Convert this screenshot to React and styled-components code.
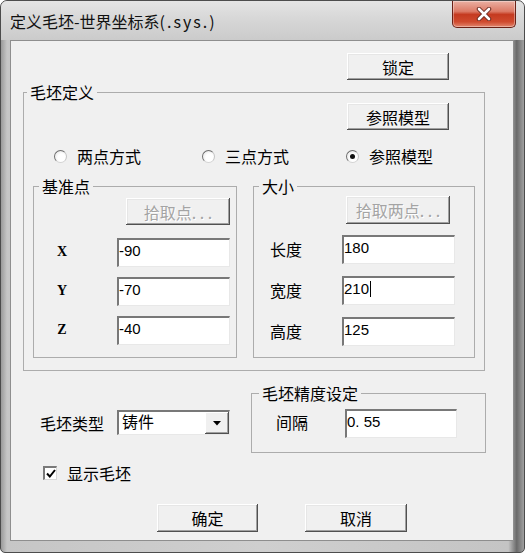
import React from "react";
import styled, { createGlobalStyle } from "styled-components";

const GlobalStyle = createGlobalStyle`
  html, body {
    margin: 0;
    padding: 0;
    background: #fff;
  }
  body {
    font-family: "Noto Sans CJK SC", "Liberation Sans", sans-serif;
    color: #000;
  }
`;

const Window = styled.div`
  width: 525px;
  height: 553px;
  box-sizing: border-box;
  display: flex;
  flex-direction: column;
  border: 1px solid #4c4c4c;
  border-radius: 7px 7px 5px 5px;
  overflow: hidden;
  background: linear-gradient(
    to right,
    #9a9a9a 0,
    #c6c6c6 6px,
    #cfcfcf 50%,
    #c4c4c4 97%,
    #6a6a6a 98.6%,
    #a0a0a0 100%
  );
`;

const TitleBar = styled.div`
  height: 39px;
  flex: none;
  display: flex;
  justify-content: space-between;
  align-items: flex-start;
  background: linear-gradient(to bottom, #e4e4e4 0%, #d6d6d6 50%, #cbcbcb 100%);
`;

const Title = styled.div`
  padding: 11px 0 0 9px;
  font-size: 16px;
  line-height: 18px;
  color: #111;
`;

const TitleLatin = styled.span`
  letter-spacing: 2px;
`;

const CloseButton = styled.div`
  width: 64px;
  height: 27px;
  margin-right: 8px;
  box-sizing: border-box;
  display: flex;
  align-items: center;
  justify-content: center;
  border: 1px solid #6b2116;
  border-top: none;
  border-radius: 0 0 5px 5px;
  background: linear-gradient(
    to bottom,
    #eab0a3 0%,
    #dc7a66 40%,
    #c53a20 52%,
    #cf4a2e 80%,
    #e2876f 100%
  );
  box-shadow: inset 0 0 0 1px rgba(255, 255, 255, 0.35);
`;

const Client = styled.div`
  flex: 1;
  margin: 0 10px 11px 9px;
  border: 1px solid #8e8e8e;
  background: #f0f0f0;
  display: flex;
  flex-direction: column;
`;

const ButtonBar = styled.div`
  display: flex;
  justify-content: ${(p) => (p.$start ? "flex-start" : "flex-end")};
  gap: ${(p) => p.$gap || 0}px;
  padding: ${(p) => p.$pt || 0}px ${(p) => p.$pr || 0}px 0 ${(p) => p.$pl || 0}px;
`;

const Button = styled.button`
  width: ${(p) => p.$w || 102}px;
  height: ${(p) => p.$h || 27}px;
  box-sizing: border-box;
  padding: 0;
  border: none;
  background: #f0f0f0;
  font-family: "Noto Sans CJK SC", sans-serif;
  font-size: 16px;
  line-height: 18px;
  color: #000;
  box-shadow: inset -1px -1px 0 #505050, inset 1px 1px 0 #ffffff,
    inset -2px -2px 0 #a0a0a0, inset 2px 2px 0 #e6e6e6;

  &:disabled {
    color: #a4a4a4;
    text-shadow: 1px 1px 0 #fff;
  }
`;

const Group = styled.fieldset`
  margin: ${(p) => p.$m || 0};
  padding: 0 0 ${(p) => p.$pb || 0}px 0;
  min-width: 0;
  width: ${(p) => (p.$w ? `${p.$w}px` : "auto")};
  box-sizing: border-box;
  border: 1px solid #acacac;
`;

const Legend = styled.legend`
  padding: 0 3px;
  margin-left: ${(p) => p.$indent}px;
  font-size: 16px;
  line-height: 18px;
`;

const RadioRow = styled.div`
  display: grid;
  grid-template-columns: 148px 144px 1fr;
  margin-top: 17px;
  padding-left: 30px;
`;

const RadioItem = styled.label`
  display: flex;
  align-items: center;
  gap: 10px;
  font-size: 16px;
  line-height: 18px;
`;

const RadioDot = styled.span`
  width: 13px;
  height: 13px;
  box-sizing: border-box;
  border-radius: 50%;
  border: 1px solid #7c7c7c;
  border-color: #6e6e6e #c4c4c4 #d4d4d4 #6e6e6e;
  background: radial-gradient(circle at 60% 60%, #ffffff 40%, #dcdcdc 100%);
  display: flex;
  align-items: center;
  justify-content: center;

  &::after {
    content: "";
    width: 5px;
    height: 5px;
    border-radius: 50%;
    background: ${(p) => (p.$checked ? "#111" : "transparent")};
  }
`;

const SubRow = styled.div`
  display: flex;
  align-items: stretch;
  gap: 16px;
  margin-top: 12px;
  padding-left: 9px;
`;

const FormGrid = styled.div`
  display: grid;
  grid-template-columns: ${(p) => p.$cols};
  row-gap: ${(p) => p.$rowGap || 0}px;
  align-items: center;
  padding: ${(p) => p.$pt || 0}px 0 0 ${(p) => p.$pl || 0}px;
`;

const AxisLabel = styled.div`
  text-align: center;
  font-family: "Liberation Serif", serif;
  font-weight: bold;
  font-size: 14px;
  padding-bottom: 2px;
`;

const Label = styled.div`
  font-size: 16px;
  line-height: 18px;
  padding-bottom: ${(p) => p.$lift || 0}px;
`;

const Field = styled.div`
  width: ${(p) => p.$w || 113}px;
  height: 29px;
  box-sizing: border-box;
  background: #fff;
  border-style: solid;
  border-width: 2px 1px 1px 2px;
  border-color: #787878 #e8e8e8 #e8e8e8 #787878;
  padding: 2px 0 0 0;
  font-family: "Liberation Sans", sans-serif;
  font-size: 15px;
  line-height: 18px;
  white-space: pre;
`;

const Caret = styled.span`
  display: inline-block;
  width: 1px;
  height: 16px;
  margin-left: 1px;
  vertical-align: -3px;
  background: #000;
`;

const BottomRow = styled.div`
  display: grid;
  grid-template-columns: 240px 235px;
  margin-top: 13px;
`;

const TypeRow = styled.div`
  display: flex;
  align-items: center;
  gap: 13px;
  margin-top: 26px;
  padding-left: 29px;
`;

const Select = styled.div`
  width: 113px;
  height: 25px;
  box-sizing: border-box;
  display: flex;
  background: #fff;
  border-style: solid;
  border-width: 2px 1px 1px 2px;
  border-color: #787878 #e8e8e8 #e8e8e8 #787878;
`;

const SelectText = styled.div`
  flex: 1;
  padding-left: 3px;
  font-size: 16px;
  line-height: 19px;
`;

const DropButton = styled.div`
  width: 24px;
  height: 100%;
  box-sizing: border-box;
  background: #f0f0f0;
  display: flex;
  align-items: center;
  justify-content: center;
  box-shadow: inset -1px -1px 0 #505050, inset 1px 1px 0 #ffffff,
    inset -2px -2px 0 #a0a0a0;
`;

const CheckRow = styled.label`
  display: flex;
  align-items: center;
  gap: 10px;
  margin-top: 11px;
  padding-left: 32px;
  font-size: 16px;
  line-height: 18px;
`;

const CheckBox = styled.span`
  width: 14px;
  height: 14px;
  box-sizing: border-box;
  background: #fff;
  border-style: solid;
  border-width: 2px 1px 1px 2px;
  border-color: #7a7a7a #d8d8d8 #d8d8d8 #7a7a7a;
  display: flex;
  align-items: center;
  justify-content: center;
`;

export default function App() {
  return (
    <>
      <GlobalStyle />
      <Window>
        <TitleBar>
          <Title>
            定义毛坯-世界坐标系<TitleLatin>(.sys.)</TitleLatin>
          </Title>
          <CloseButton>
            <svg width="18" height="14" viewBox="0 0 18 14">
              <path d="M4 2 L14 12 M14 2 L4 12" stroke="#6a2a20" strokeWidth="4.5" strokeLinecap="round" />
              <path d="M4 2 L14 12 M14 2 L4 12" stroke="#ffffff" strokeWidth="2.6" strokeLinecap="round" />
            </svg>
          </CloseButton>
        </TitleBar>

        <Client>
          <ButtonBar $pt={12} $pr={64}>
            <Button>锁定</Button>
          </ButtonBar>

          <Group $m="3px 28px 0 12px" $pb={12}>
            <Legend $indent={3}>毛坯定义</Legend>
            <ButtonBar $pt={2} $pr={35}>
              <Button>参照模型</Button>
            </ButtonBar>

            <RadioRow>
              <RadioItem>
                <RadioDot />
                两点方式
              </RadioItem>
              <RadioItem>
                <RadioDot />
                三点方式
              </RadioItem>
              <RadioItem>
                <RadioDot $checked />
                参照模型
              </RadioItem>
            </RadioRow>

            <SubRow>
              <Group $w={204} $pb={11}>
                <Legend $indent={5}>基准点</Legend>
                <ButtonBar $pt={3} $pr={6}>
                  <Button $w={104} disabled>
                    拾取点. . .
                  </Button>
                </ButtonBar>
                <FormGrid $cols="56px 27px 113px" $rowGap={10} $pt={13}>
                  <AxisLabel>X</AxisLabel>
                  <span />
                  <Field>-90</Field>
                  <AxisLabel>Y</AxisLabel>
                  <span />
                  <Field>-70</Field>
                  <AxisLabel>Z</AxisLabel>
                  <span />
                  <Field>-40</Field>
                </FormGrid>
              </Group>

              <Group $w={222} $pb={11}>
                <Legend $indent={5}>大小</Legend>
                <ButtonBar $pt={1} $pr={24}>
                  <Button $w={104} $h={28} disabled>
                    拾取两点. . .
                  </Button>
                </ButtonBar>
                <FormGrid $cols="72px 113px" $rowGap={12} $pt={11} $pl={16}>
                  <Label $lift={2}>长度</Label>
                  <Field>180</Field>
                  <Label $lift={2}>宽度</Label>
                  <Field>
                    210
                    <Caret />
                  </Field>
                  <Label $lift={2}>高度</Label>
                  <Field>125</Field>
                </FormGrid>
              </Group>
            </SubRow>
          </Group>

          <BottomRow>
            <div>
              <TypeRow>
                <Label>毛坯类型</Label>
                <Select>
                  <SelectText>铸件</SelectText>
                  <DropButton>
                    <svg width="8" height="5" viewBox="0 0 8 5">
                      <path d="M0 0 H8 L4 4.5 Z" fill="#000" />
                    </svg>
                  </DropButton>
                </Select>
              </TypeRow>
            </div>

            <Group $pb={14}>
              <Legend $indent={7}>毛坯精度设定</Legend>
              <FormGrid $cols="69px 112px" $pt={7} $pl={24}>
                <Label $lift={3}>间隔</Label>
                <Field $w={112}>0. 55</Field>
              </FormGrid>
            </Group>
          </BottomRow>

          <CheckRow>
            <CheckBox>
              <svg width="10" height="9" viewBox="0 0 10 9">
                <path d="M1 4.5 L3.8 7.5 L9 1" stroke="#000" strokeWidth="2" fill="none" />
              </svg>
            </CheckBox>
            显示毛坯
          </CheckRow>

          <ButtonBar $start $pt={22} $pl={146} $gap={47}>
            <Button $w={101} $h={28}>
              确定
            </Button>
            <Button $w={102} $h={28}>
              取消
            </Button>
          </ButtonBar>
        </Client>
      </Window>
    </>
  );
}
